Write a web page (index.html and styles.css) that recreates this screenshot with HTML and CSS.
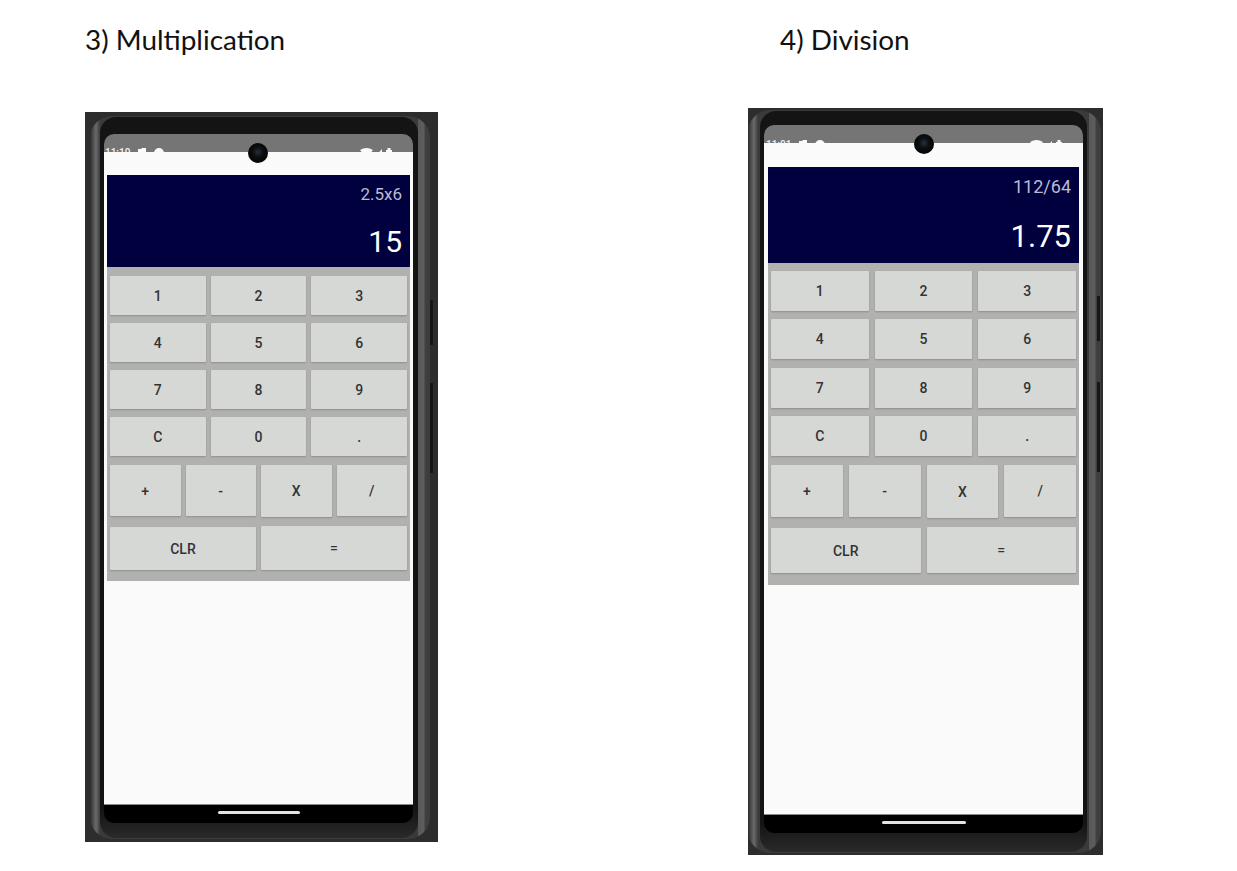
FILE: index.html
```html
<!DOCTYPE html>
<html lang="en">
<head>
  <meta charset="UTF-8" />
  <title>Calculator screenshots</title>
  <link rel="stylesheet" href="styles.css">
</head>
<body>
  <section class="shot shot-mul">
    <h2 class="shot-title">3) Multiplication</h2>
    <div class="phone">
      <span class="side-btn side-power"></span>
      <span class="side-btn side-volume"></span>
      <div class="phone-band">
        <div class="phone-bezel">
          <span class="camera"></span>
          <div class="screen">
            <div class="status">
              <span class="status-left">11:10
                <svg class="status-icon" viewBox="0 0 26 10"><path d="M0 1h3l1-1h4v10H0zM16 5a5 5 0 1 1 10 0v5H16z"/></svg>
              </span>
              <svg class="status-icon status-right" viewBox="0 0 32 10"><path d="M0 2Q6.5-2 13 2L6.5 10zM14 10l8-9v9zM26 2h1.500V0h3v2H32v8h-6z"/></svg>
            </div>
            <div class="app">
              <div class="calc">
                <div class="display">
                  <div class="expr">2.5x6</div>
                  <div class="result">15</div>
                </div>
                <div class="keypad">
                  <div class="keys keys-3">
                    <div class="key">1</div><div class="key">2</div><div class="key">3</div>
                    <div class="key">4</div><div class="key">5</div><div class="key">6</div>
                    <div class="key">7</div><div class="key">8</div><div class="key">9</div>
                    <div class="key">C</div><div class="key">0</div><div class="key">.</div>
                  </div>
                  <div class="keys keys-4">
                    <div class="key">+</div><div class="key">-</div><div class="key key-tall">X</div><div class="key">/</div>
                  </div>
                  <div class="keys keys-2">
                    <div class="key key-low">CLR</div><div class="key">=</div>
                  </div>
                </div>
              </div>
            </div>
            <div class="navbar"><span class="home-bar"></span></div>
          </div>
        </div>
      </div>
    </div>
  </section>

  <section class="shot shot-div">
    <h2 class="shot-title">4) Division</h2>
    <div class="phone">
      <span class="side-btn side-power"></span>
      <span class="side-btn side-volume"></span>
      <div class="phone-band">
        <div class="phone-bezel">
          <span class="camera"></span>
          <div class="screen">
            <div class="status">
              <span class="status-left">11:01
                <svg class="status-icon" viewBox="0 0 26 10"><path d="M0 1h3l1-1h4v10H0zM16 5a5 5 0 1 1 10 0v5H16z"/></svg>
              </span>
              <svg class="status-icon status-right" viewBox="0 0 32 10"><path d="M0 2Q6.5-2 13 2L6.5 10zM14 10l8-9v9zM26 2h1.500V0h3v2H32v8h-6z"/></svg>
            </div>
            <div class="app">
              <div class="calc">
                <div class="display">
                  <div class="expr">112/64</div>
                  <div class="result">1.75</div>
                </div>
                <div class="keypad">
                  <div class="keys keys-3">
                    <div class="key">1</div><div class="key">2</div><div class="key">3</div>
                    <div class="key">4</div><div class="key">5</div><div class="key">6</div>
                    <div class="key">7</div><div class="key">8</div><div class="key">9</div>
                    <div class="key">C</div><div class="key">0</div><div class="key">.</div>
                  </div>
                  <div class="keys keys-4">
                    <div class="key">+</div><div class="key">-</div><div class="key key-tall">X</div><div class="key">/</div>
                  </div>
                  <div class="keys keys-2">
                    <div class="key key-low">CLR</div><div class="key">=</div>
                  </div>
                </div>
              </div>
            </div>
            <div class="navbar"><span class="home-bar"></span></div>
          </div>
        </div>
      </div>
    </div>
  </section>
</body>
</html>
```

FILE: styles.css
```css
html, body {
  margin: 0;
  height: 871px;
  overflow: hidden;
  background: #fff;
}
body {
  display: flex;
  align-items: flex-start;
}

.shot-title {
  margin: 0;
  font-family: Lato, "Open Sans", sans-serif;
  font-size: 27.9px;
  font-weight: 400;
  line-height: 34px;
  color: #111;
}

/* each shot has its own scale, so the sizes sit in variables */
.shot-mul {
  --phone-w: 353px;
  --phone-h: 730px;
  --outer: 4px 8px 3px 5px;
  --band: 1px 12px 1px 10px;
  --bezel: 17px 5px 15px 4px;
  --camera-top: 26px;
  --camera-x: -11px;
  --status-top: 13px;
  --status-left: 1px;
  --side-right: 5px;
  --side-vol-top: 271px;
  --app-h: 653px;
  --calc-top: 23px;
  --calc-x: 3px;
  --display-h: 92px;
  --key-x: 3px;
  --gap: 5px;
  --rows: 39px;
  --row-gap: 8px;
  --keys4-h: 51px;
  --keys2-h: 44px;
  --pad-keys-top: 9px;
  --pad-keys-bottom: 11px;
  --expr-size: 17px;
  --result-size: 30px;
  --result-top: 19px;
  --home-w: 82px;
  margin-left: 85px;
  width: 663px;
  padding-top: 22px;
}
.shot-div {
  --phone-w: 355px;
  --phone-h: 747px;
  --outer: 2px 2px 2px 0;
  --band: 1px 14px 1px 12px;
  --bezel: 14px 4px 19px 4px;
  --camera-top: 23px;
  --camera-x: -9.5px;
  --status-top: 14px;
  --status-left: 2px;
  --side-right: 3px;
  --side-vol-top: 274px;
  --app-h: 672px;
  --calc-top: 24px;
  --calc-x: 4px;
  --display-h: 96px;
  --key-x: 3px;
  --gap: 6px;
  --rows: 40px;
  --row-gap: 8.3px;
  --keys4-h: 52px;
  --keys2-h: 46px;
  --pad-keys-top: 8px;
  --pad-keys-bottom: 12px;
  --expr-size: 18px;
  --result-size: 31px;
  --result-top: 22px;
  --home-w: 84px;
  width: 355px;
  padding-top: 22px;
}
.shot-div .shot-title {
  margin-left: 32px;
}
.shot-mul .phone {
  margin-top: 56px;
}
.shot-div .phone {
  margin-top: 52px;
}

/* phone frame */
.phone {
  position: relative;
  box-sizing: border-box;
  width: var(--phone-w);
  height: var(--phone-h);
  background: #2d2d2d;
  padding: var(--outer);
}
.phone-band {
  box-sizing: border-box;
  height: 100%;
  border-radius: 22px;
  background:
    linear-gradient(90deg, #2c2c2c, #4c4c4c 3px, #6a6a6a 6px, #3c3c3c 10px, transparent 10px),
    linear-gradient(270deg, #3c3c3c, #404040 5px, #5e5e5e 6px, #585858 12px, transparent 12px),
    #3a3a3a;
  padding: var(--band);
}
.phone-bezel {
  position: relative;
  box-sizing: border-box;
  height: 100%;
  border-radius: 16px;
  background: linear-gradient(180deg, #141414 96%, #2a2a2a);
  padding: var(--bezel);
}
.side-btn {
  position: absolute;
  right: var(--side-right);
  width: 3px;
  background: #161616;
  z-index: 2;
}
.side-power {
  top: 188px;
  height: 45px;
}
.side-volume {
  top: var(--side-vol-top);
  height: 90px;
}
.camera {
  position: absolute;
  top: var(--camera-top);
  left: 50%;
  width: 20px;
  height: 20px;
  margin-left: var(--camera-x);
  border-radius: 50%;
  background: radial-gradient(circle at 50% 45%, #25313c, #0c0e10 35%, #050505 70%, #222);
  z-index: 3;
}

/* screen */
.screen {
  height: 100%;
  border-radius: 10px;
  overflow: hidden;
  background: #000;
}
.status {
  display: flex;
  justify-content: space-between;
  align-items: flex-start;
  height: 18px;
  background: #757575;
  overflow: hidden;
  padding: var(--status-top) 21px 0 var(--status-left);
  box-sizing: border-box;
  font: 500 10px/12px Roboto, sans-serif;
  color: #f4f4f4;
}
.status-left {
  display: flex;
  gap: 8px;
}
.status-icon {
  width: 26px;
  height: 10px;
  margin-top: 1px;
  fill: #fafafa;
}
.status-right {
  width: 32px;
}
.app {
  box-sizing: border-box;
  height: var(--app-h);
  background: #fafafa;
  border-bottom: 1px solid #8a8a8a;
  padding: var(--calc-top) var(--calc-x) 0;
}
.navbar {
  display: flex;
  justify-content: center;
  padding-top: 6px;
}
.home-bar {
  width: var(--home-w);
  height: 3px;
  border-radius: 2px;
  background: #e4e4e4;
}

/* calculator */
.display {
  box-sizing: border-box;
  height: var(--display-h);
  background: #00003f;
  padding: 9px 8px 0;
  text-align: right;
  font-family: Roboto, sans-serif;
}
.expr {
  font-size: var(--expr-size);
  line-height: 21px;
  color: #bcbcd0;
}
.result {
  margin-top: var(--result-top);
  font-size: var(--result-size);
  line-height: 36px;
  color: #fff;
}
.keypad {
  background: #b1b1af;
  padding: var(--pad-keys-top) var(--key-x) var(--pad-keys-bottom);
}
.keys {
  display: grid;
  column-gap: var(--gap);
}
.keys-3 {
  grid-template-columns: repeat(3, 1fr);
  grid-auto-rows: var(--rows);
  row-gap: var(--row-gap);
}
.keys-4 {
  grid-template-columns: repeat(4, 1fr);
  height: var(--keys4-h);
  margin-top: calc(var(--row-gap) + 1px);
}
.keys-2 {
  grid-template-columns: repeat(2, 1fr);
  height: var(--keys2-h);
  margin-top: 10px;
}
.key {
  display: flex;
  align-items: center;
  justify-content: center;
  background: #d6d8d6;
  border-radius: 1px;
  box-shadow: 0 1px 2px rgba(0, 0, 0, 0.2);
  font: 500 14px/1 Roboto, sans-serif;
  color: #333;
}
.key-tall {
  margin-bottom: -1px;
}
.key-low {
  margin-top: 1px;
}
```
